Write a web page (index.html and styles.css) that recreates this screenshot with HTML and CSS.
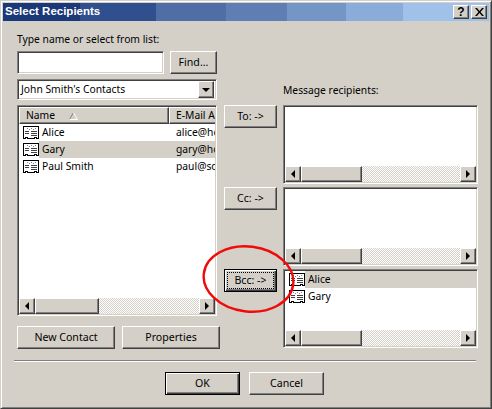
FILE: index.html
```html
<!DOCTYPE html>
<html lang="en">
<head>
<meta charset="utf-8">
<title>Select Recipients</title>
<link rel="stylesheet" href="styles.css">
</head>
<body>
<svg class="defs" width="0" height="0" aria-hidden="true">
  <symbol id="card" viewBox="0 0 16 13">
    <path d="M0.5 0.5H15.5V12.5H13.5V11.5H11.5V12.5H4.5V11.5H2.5V12.5H0.5Z" fill="#fff" stroke="#000" shape-rendering="crispEdges"/>
    <path d="M4 2.500H5M6 3.500H7M8 2.500H9M10 3.500H11M12 2.500H13" stroke="#808080" shape-rendering="crispEdges"/>
    <path d="M2 5.500H6M2 7.500H6M8 5.500H14M8 7.500H14M8 9.500H14" stroke="#404040" shape-rendering="crispEdges"/>
  </symbol>
</svg>
<div class="window">
  <header class="titlebar">
    <div class="band b1"></div><div class="band b2"></div><div class="band b3"></div><div class="band b4"></div><div class="band b5"></div><div class="band b6"></div><div class="band b7"></div>
    <span class="title-text">Select Recipients</span>
    <div class="title-btns">
      <span class="raised tbtn">?</span>
      <span class="raised tbtn">
        <svg width="9" height="8" viewBox="0 0 9 8"><path d="M0 0H2L4.500 3 7 0H9L5.500 4 9 8H7L4.500 5 2 8H0L3.500 4Z"/></svg>
      </span>
    </div>
  </header>
  <div class="client">
    <div class="main">
      <div class="left">
        <label class="label">Type name or select from list:</label>
        <div class="find-row">
          <div class="sunken input"></div>
          <button class="raised btn find">Find...</button>
        </div>
        <div class="sunken combo">
          <span class="combo-text">John Smith's Contacts</span>
          <span class="raised combo-btn"><i class="arr down"></i></span>
        </div>
        <div class="sunken list big">
          <div class="cols">
            <div class="raised col name">Name<svg class="sort" width="9" height="8" viewBox="0 0 9 8"><path d="M4.500 0.500L0.500 7.500" stroke="#808080" fill="none"/><path d="M4.500 0.500L8.500 7.500H0.500" stroke="#fff" fill="none"/></svg></div>
            <div class="raised col mail">E-Mail Address</div>
          </div>
          <div class="rows">
            <div class="row"><svg class="ico"><use href="#card"/></svg><span class="who">Alice</span><span class="addr">alice@hotmail.com</span></div>
            <div class="row on"><svg class="ico"><use href="#card"/></svg><span class="who">Gary</span><span class="addr">gary@hotmail.com</span></div>
            <div class="row"><svg class="ico"><use href="#card"/></svg><span class="who">Paul Smith</span><span class="addr">paul@somewhere.com</span></div>
          </div>
          <div class="hscroll wide">
            <span class="raised sb"><i class="arr lt"></i></span><span class="raised thumb"></span><span class="track"></span><span class="raised sb"><i class="arr rt"></i></span>
          </div>
        </div>
        <div class="actions">
          <button class="raised btn act">New Contact</button>
          <button class="raised btn act">Properties</button>
        </div>
      </div>
      <div class="right">
        <div class="label recip-label">Message recipients:</div>
        <div class="slots">
          <div class="slot">
            <button class="raised btn to">To: -&gt;</button>
            <div class="sunken list small">
              <div class="rows"></div>
              <div class="hscroll">
                <span class="raised sb"><i class="arr lt"></i></span><span class="raised thumb"></span><span class="track"></span><span class="raised sb"><i class="arr rt"></i></span>
              </div>
            </div>
          </div>
          <div class="slot">
            <button class="raised btn to">Cc: -&gt;</button>
            <div class="sunken list small">
              <div class="rows"></div>
              <div class="hscroll">
                <span class="raised sb"><i class="arr lt"></i></span><span class="raised thumb"></span><span class="track"></span><span class="raised sb"><i class="arr rt"></i></span>
              </div>
            </div>
          </div>
          <div class="slot">
            <button class="raised btn to default"><span class="focus">Bcc: -&gt;</span></button>
            <div class="sunken list small">
              <div class="rows">
                <div class="row on"><svg class="ico"><use href="#card"/></svg><span class="who">Alice</span></div>
                <div class="row"><svg class="ico"><use href="#card"/></svg><span class="who">Gary</span></div>
              </div>
              <div class="hscroll">
                <span class="raised sb"><i class="arr lt"></i></span><span class="raised thumb"></span><span class="track"></span><span class="raised sb"><i class="arr rt"></i></span>
              </div>
            </div>
          </div>
        </div>
      </div>
    </div>
    <div class="sep"></div>
    <div class="footer">
      <button class="raised btn foot default">OK</button>
      <button class="raised btn foot">Cancel</button>
    </div>
  </div>
  <svg class="ring" width="96" height="72" viewBox="0 0 96 72"><ellipse cx="47.500" cy="35" rx="45" ry="32.500" transform="rotate(7 47.500 35)" fill="none" stroke="#f00a0a" stroke-width="2.400"/></svg>
</div>
</body>
</html>
```
FILE: styles.css
```css
* { box-sizing: border-box; }
html, body { margin: 0; padding: 0; }
body { width: 492px; height: 409px; overflow: hidden; background: #d4d0c8; font: 10.300px/13px "Noto Sans", "Liberation Sans", sans-serif; color: #000; }
.defs { position: absolute; }
.window { position: relative; width: 492px; height: 409px; background: #d4d0c8; border: 1px solid; border-color: #d4d0c8 #404040 #404040 #d4d0c8; box-shadow: inset 1px 1px #fff, inset -1px -1px #808080; padding: 2px; }
.titlebar { position: relative; display: flex; height: 18px; width: 486px; overflow: hidden; }
.band { height: 18px; }
.b1 { width: 77px; background: #1b3878; }
.b2 { width: 76px; background: #2f4f8e; }
.b3 { width: 70px; background: #4f6ea6; }
.b4 { width: 61px; background: #5f7fb4; }
.b5 { width: 59px; background: #7496c6; }
.b6 { width: 57px; background: #8aacda; }
.b7 { flex: 1; background: #a0c2ea; }
.title-text { position: absolute; left: 2px; top: 2px; color: #fff; font: bold 11.500px/13px "Liberation Sans", sans-serif; }
.title-btns { position: absolute; right: 2px; top: 2px; display: flex; gap: 2px; }
.raised { background: #d4d0c8; border: 1px solid; border-color: #fff #404040 #404040 #fff; box-shadow: inset -1px -1px #808080; }
.sunken { background: #fff; border: 1px solid; border-color: #808080 #fff #fff #808080; box-shadow: inset 1px 1px #404040, inset -1px -1px #d4d0c8; }
.tbtn { width: 16px; height: 14px; display: flex; align-items: center; justify-content: center; font: bold 12px/12px "Liberation Sans", sans-serif; }
.client { padding: 12px 11px 0 14px; }
.main { display: flex; height: 316px; }
.left { width: 203px; display: flex; flex-direction: column; }
.label { display: block; height: 13px; }
.find-row { display: flex; gap: 6px; margin-top: 5px; width: 200px; }
.input { width: 147px; height: 23px; }
.btn { font: 10.600px/13px "Noto Sans", "Liberation Sans", sans-serif; color: #000; padding: 0; display: flex; align-items: center; justify-content: center; }
.find { width: 47px; height: 23px; }
.combo { width: 200px; height: 21px; margin-top: 5px; display: flex; align-items: center; justify-content: space-between; padding: 0 2px 0 3px; }
.combo-text { white-space: nowrap; }
.combo-btn { width: 16px; height: 17px; display: flex; align-items: center; justify-content: center; }
.arr { display: block; width: 0; height: 0; border-style: solid; border-color: transparent; }
.down { border-width: 4px 4px 0; border-top-color: #000; }
.lt { border-width: 4px 4px 4px 0; border-right-color: #000; }
.rt { border-width: 4px 0 4px 4px; border-left-color: #000; }
.list { display: flex; flex-direction: column; padding: 1px; overflow: hidden; }
.big { width: 200px; height: 211px; margin-top: 5px; }
.small { width: 195px; height: 79px; }
.cols { display: flex; height: 17px; flex: none; width: 196px; overflow: hidden; }
.col { height: 17px; display: flex; align-items: center; white-space: nowrap; padding-left: 6px; flex: none; }
.name { width: 150px; position: relative; }
.mail { width: 110px; }
.sort { position: absolute; left: 49px; top: 4px; }
.rows { flex: 1; min-height: 0; overflow: hidden; }
.row { display: flex; align-items: center; height: 17px; white-space: nowrap; padding-left: 4px; position: relative; }
.ico { width: 16px; height: 13px; flex: none; position: relative; }
.row.on::before { content: ""; position: absolute; left: 20px; right: 0; top: 0; bottom: 0; background: #d4d0c8; }
.who { position: relative; margin-left: 3px; }
.addr { position: absolute; left: 157px; }
.hscroll { display: flex; height: 16px; flex: none; }
.sb { width: 16px; height: 16px; flex: none; display: flex; align-items: center; justify-content: center; }
.thumb { width: 61px; height: 16px; flex: none; }
.wide .thumb { width: 64px; }
.track { flex: 1; background: repeating-conic-gradient(#d4d0c8 0 25%, #fff 0 50%) 0 0 / 2px 2px; }
.actions { display: flex; gap: 7px; margin-top: 10px; }
.act { width: 98px; height: 23px; }
.right { flex: 1; display: flex; flex-direction: column; margin-left: 4px; }
.recip-label { margin-left: 59px; margin-top: 51px; }
.slots { display: flex; flex-direction: column; gap: 3px; margin-top: 8px; }
.slot { display: flex; gap: 6px; align-items: flex-start; }
.to { width: 53px; height: 23px; flex: none; }
.default { border-color: #000; box-shadow: inset 1px 1px #fff, inset -1px -1px #404040, inset -2px -2px #808080; }
.focus { border: 1px dotted #000; padding: 1px 2px; width: 47px; height: 17px; display: flex; align-items: center; justify-content: center; }
.sep { height: 2px; width: 462px; margin: 11px 0 0 -3px; border-top: 1px solid #808080; border-bottom: 1px solid #fff; }
.footer { display: flex; justify-content: flex-start; gap: 9px; margin: 10px 0 0 148px; }
.foot { width: 75px; height: 23px; }
.ring { position: absolute; left: 200px; top: 243px; pointer-events: none; }
```
